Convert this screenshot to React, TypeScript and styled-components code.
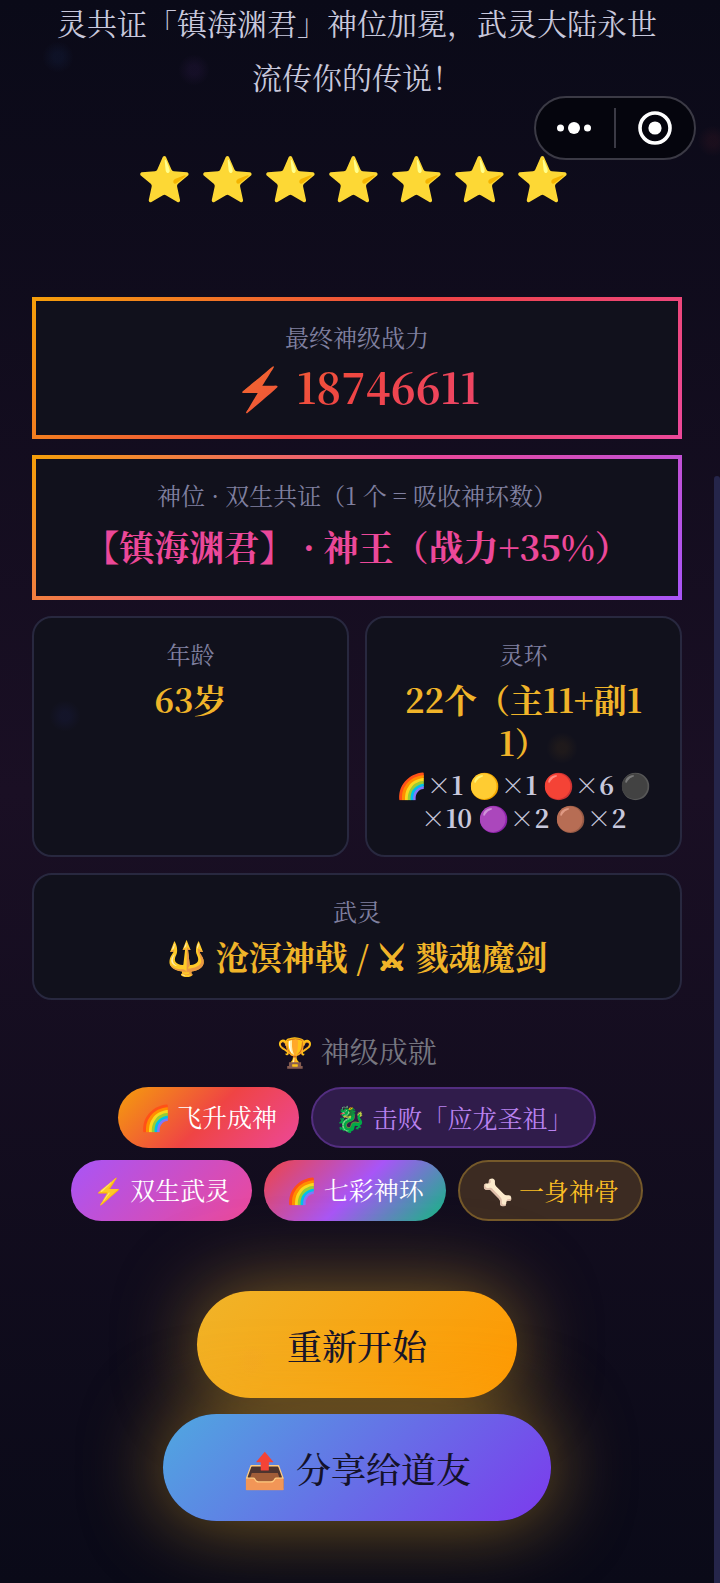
import React from "react";
import styled, { createGlobalStyle, css } from "styled-components";

const GlobalStyle = createGlobalStyle`
  * { box-sizing: border-box; }
  body {
    margin: 0;
    background: #0a0a18;
    color: #c8c8dc;
    font-family: "Noto Serif CJK SC", "Noto Serif SC", "Noto Sans CJK SC", serif;
  }
`;

const Page = styled.div`
  position: relative;
  display: flex;
  min-height: 100vh;
  overflow: hidden;
  background: linear-gradient(180deg, #0a0a18 0%, #1a0f24 50%, #0a0a18 100%);
`;

const Main = styled.main`
  flex: 1;
  display: flex;
  flex-direction: column;
  padding: 0 32px 62px;
`;

const ScrollRail = styled.div`
  width: 6px;
  padding-top: 476px;
  display: flex;
`;

const ScrollThumb = styled.div`
  flex: 1;
  border-radius: 3px 3px 0 0;
  background: #25254a;
`;

const Mote = styled.i<{ $x: string; $y: number; $color: string }>`
  position: absolute;
  left: ${(p) => p.$x};
  top: ${(p) => p.$y}px;
  width: 32px;
  height: 32px;
  margin: -16px;
  border-radius: 50%;
  background: radial-gradient(circle, ${(p) => p.$color} 0 20%, transparent 70%);
  opacity: 0.06;
  pointer-events: none;
`;

const Capsule = styled.div`
  position: absolute;
  top: 96px;
  right: 24px;
  z-index: 2;
  display: flex;
  align-items: center;
  width: 162px;
  height: 64px;
  border: 2px solid #3b3a45;
  border-radius: 32px;
  background: #05050d;
`;

const CapsuleButton = styled.button`
  flex: 1;
  display: flex;
  justify-content: center;
  padding: 0;
  border: 0;
  background: none;
  color: #fff;
`;

const CapsuleDivider = styled.span`
  width: 2px;
  height: 40px;
  background: #3b3a45;
`;

const Story = styled.p`
  margin: -5px 0 0;
  padding: 0 16px;
  font-size: 30px;
  font-weight: 400;
  line-height: 54px;
  text-align: center;
`;

const Stars = styled.div`
  margin-top: 40px;
  font-size: 44px;
  line-height: 66px;
  letter-spacing: 8px;
  text-align: center;
  white-space: nowrap;
`;

const Stats = styled.section`
  display: grid;
  grid-template-columns: 1fr 1fr;
  gap: 16px;
  margin-top: 88px;
`;

const Card = styled.div<{ $wide?: boolean; $frame?: string }>`
  min-width: 0;
  padding: 18px 22px 21px;
  border: 2px solid #28283f;
  border-radius: 20px;
  background: #11111c;
  text-align: center;
  word-break: break-all;
  ${(p) => p.$wide && css`grid-column: 1 / -1;`}
  ${(p) =>
    p.$frame &&
    css`
      border: 4px solid;
      border-image: linear-gradient(135deg, ${p.$frame}) 1;
    `}
`;

const Label = styled.div`
  font-size: 24px;
  line-height: 36px;
  color: #8080a0;
`;

const Value = styled.div<{ $tone?: "god" }>`
  margin-top: 5px;
  font-size: 33px;
  font-weight: 700;
  line-height: 43px;
  color: #f0b429;
  ${(p) =>
    p.$tone === "god" &&
    css`
      font-size: 35px;
      line-height: 57px;
      color: #ec4899;
    `}
`;

const Swords = styled.span`
  -webkit-text-stroke: 1px currentColor;
`;

const Power = styled.div`
  margin-top: 4px;
  font-size: 42px;
  font-weight: 700;
  line-height: 55px;
  background: linear-gradient(135deg, #f59e0b, #ef4444, #ec4899);
  -webkit-background-clip: text;
  background-clip: text;
  color: transparent;
`;

const Rings = styled.div`
  margin-top: 5px;
  font-size: 25px;
  font-weight: 700;
  line-height: 33px;
  color: #c8c8dc;
`;

const Heading = styled.h2`
  margin: 31px 0 16px;
  font-size: 29px;
  font-weight: 400;
  line-height: 40px;
  text-align: center;
  color: #777780;
`;

const Tags = styled.ul`
  display: flex;
  flex-wrap: wrap;
  justify-content: center;
  gap: 12px;
  margin: 0;
  padding: 0 16px;
  list-style: none;
`;

const Tag = styled.li<{ $fill: string; $ink?: string; $line?: string }>`
  height: 61px;
  padding: ${(p) => (p.$line ? "9px 22px" : "10px 22px")};
  border: ${(p) => (p.$line ? `2px solid ${p.$line}` : "0")};
  border-radius: 31px;
  background: ${(p) => p.$fill};
  color: ${(p) => p.$ink ?? "#fff"};
  font-size: 25px;
  line-height: 38px;
  white-space: nowrap;
`;

const Actions = styled.div`
  display: flex;
  flex-direction: column;
  align-items: center;
  gap: 16px;
  margin-top: 70px;
`;

const Action = styled.button<{ $fill: string; $pad: number }>`
  height: 107px;
  padding: 0 ${(p) => p.$pad}px;
  border: 0;
  border-radius: 54px;
  background: linear-gradient(135deg, ${(p) => p.$fill});
  box-shadow: 0 0 80px rgba(240, 180, 41, 0.5);
  color: #14122a;
  font-family: inherit;
  font-size: 35px;
  font-weight: 500;
  line-height: 52px;
`;

const tags = [
  { text: "🌈 飞升成神", fill: "linear-gradient(135deg, #f59e0b, #ef4444, #ec4899)" },
  { text: "🐉 击败「应龙圣祖」", fill: "#301c4b", ink: "#b982f0", line: "#532e80" },
  { text: "⚡ 双生武灵", fill: "linear-gradient(135deg, #a855f7, #ec4899)" },
  { text: "🌈 七彩神环", fill: "linear-gradient(135deg, #ef4444, #a855f7, #10b981)" },
  { text: "🦴 一身神骨", fill: "#3c2b22", ink: "#fbbf24", line: "#75592a" },
];

export default function App() {
  return (
    <Page>
      <GlobalStyle />
      <Main>
        <Story>灵共证「镇海渊君」神位加冕，武灵大陆永世流传你的传说！</Story>
        <Stars role="img" aria-label="七星">⭐⭐⭐⭐⭐⭐⭐</Stars>
        <Stats>
          <Card $wide $frame="#f59e0b, #ef4444, #ec4899">
            <Label>最终神级战力</Label>
            <Power>⚡ 18746611</Power>
          </Card>
          <Card $wide $frame="#f59e0b, #ec4899, #a855f7">
            <Label>神位 · 双生共证（1 个 = 吸收神环数）</Label>
            <Value $tone="god">【镇海渊君】 · 神王（战力+35%）</Value>
          </Card>
          <Card>
            <Label>年龄</Label>
            <Value>63岁</Value>
          </Card>
          <Card>
            <Label>灵环</Label>
            <Value>22个（主11+副11）</Value>
            <Rings>🌈×1 🟡×1 🔴×6 ⚫×10 🟣×2 🟤×2</Rings>
          </Card>
          <Card $wide>
            <Label>武灵</Label>
            <Value>🔱 沧溟神戟 / <Swords>⚔</Swords> 戮魂魔剑</Value>
          </Card>
        </Stats>
        <Heading>🏆 神级成就</Heading>
        <Tags>
          {tags.map((t) => (
            <Tag key={t.text} $fill={t.fill} $ink={t.ink} $line={t.line}>{t.text}</Tag>
          ))}
        </Tags>
        <Actions>
          <Action type="button" $fill="#f0b429, #ff9800" $pad={90}>重新开始</Action>
          <Action type="button" $fill="#4fa8e0, #7c3aed" $pad={80}>📤 分享给道友</Action>
        </Actions>
      </Main>
      <ScrollRail>
        <ScrollThumb />
      </ScrollRail>
      <Mote $x="8%" $y={57} $color="#3b82f6" />
      <Mote $x="27%" $y={70} $color="#a855f7" />
      <Mote $x="99%" $y={141} $color="#ef4444" />
      <Mote $x="9%" $y={716} $color="#3b4cf6" />
      <Mote $x="78%" $y={748} $color="#f59e0b" />
      <Mote $x="35%" $y={1360} $color="#ef8a44" />
      <Capsule>
        <CapsuleButton type="button" aria-label="更多">
          <svg width="36" height="14" viewBox="0 0 36 14" fill="currentColor">
            <circle cx="3.5" cy="7" r="3.5" />
            <circle cx="17" cy="7" r="6" />
            <circle cx="30.5" cy="7" r="3.5" />
          </svg>
        </CapsuleButton>
        <CapsuleDivider />
        <CapsuleButton type="button" aria-label="关闭">
          <svg width="34" height="34" viewBox="0 0 34 34">
            <circle cx="17" cy="17" r="15" fill="none" stroke="currentColor" strokeWidth="3.6" />
            <circle cx="17" cy="17" r="6.6" fill="currentColor" />
          </svg>
        </CapsuleButton>
      </Capsule>
    </Page>
  );
}
